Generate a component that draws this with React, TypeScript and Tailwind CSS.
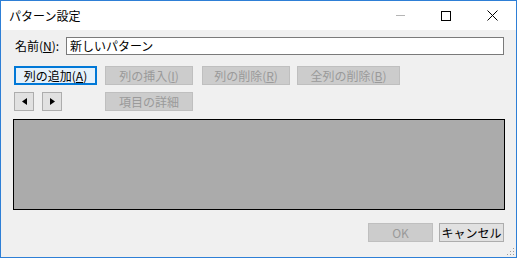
import React from "react";

const jp = { fontFamily: '"Noto Sans CJK JP", "Noto Sans", sans-serif' };

function Btn({
  children,
  w,
  disabled,
  focused,
  className = "",
}: {
  children: React.ReactNode;
  w: string;
  disabled?: boolean;
  focused?: boolean;
  className?: string;
}) {
  const base = "flex h-[19px] items-center justify-center border text-[12px] leading-none";
  const tone = disabled
    ? "border-[#bfbfbf] bg-[#cccccc] text-[#9a9a9a]"
    : focused
      ? "border-[#0078d7] bg-[#e5f1fb] text-black shadow-[inset_0_0_0_1px_#0078d7]"
      : "border-[#adadad] bg-[#e1e1e1] text-black";
  return <div className={`${base} ${tone} ${w} ${className}`}>{children}</div>;
}

export default function App() {
  return (
    <div
      className="flex h-[258px] w-[517px] flex-col border border-[#2e7fd6] bg-[#f0f0f0]"
      style={jp}
    >
      {/* title bar */}
      <div className="flex h-[29px] items-center bg-white">
        <span className="ml-[8px] text-[12px] text-black">パターン設定</span>
        <div className="ml-auto flex items-center">
          <span className="mr-[36px] h-px w-[9px] bg-[#b5b5b5]" />
          <span className="mr-[36px] h-[10px] w-[10px] border border-black" />
          <svg width="11" height="11" viewBox="0 0 11 11" className="mr-[18px]">
            <path d="M0.5 0.5 L10.5 10.5 M10.5 0.5 L0.5 10.5" stroke="#000" strokeWidth="1" />
          </svg>
        </div>
      </div>

      {/* body */}
      <div className="relative flex flex-1 flex-col px-[12px] pt-[7px]">
        <div className="flex h-[18px] items-center">
          <span className="ml-[2px] w-[51px] text-[12px] leading-none text-black">
            名前(<span className="underline">N</span>):
          </span>
          <div className="flex h-[18px] w-[439px] items-center border border-[#7a7a7a] bg-white pl-[3px] text-[12px] leading-none text-black">
            新しいパターン
          </div>
        </div>

        <div className="mt-[11px] flex">
          <Btn w="w-[83px]" focused className="ml-px">
            列の追加(<span className="underline">A</span>)
          </Btn>
          <Btn w="w-[88px]" disabled className="ml-[8px]">
            列の挿入(<span className="underline">I</span>)
          </Btn>
          <Btn w="w-[88px]" disabled className="ml-[9px]">
            列の削除(<span className="underline">R</span>)
          </Btn>
          <Btn w="w-[103px]" disabled className="ml-[7px]">
            全列の削除(<span className="underline">B</span>)
          </Btn>
        </div>

        <div className="mt-[7px] flex">
          <Btn w="w-[20px]" className="ml-px">
            <svg width="5" height="7" viewBox="0 0 5 7">
              <path d="M5 0 L0 3.5 L5 7 Z" fill="#000" />
            </svg>
          </Btn>
          <Btn w="w-[20px]" className="ml-[8px]">
            <svg width="5" height="7" viewBox="0 0 5 7">
              <path d="M0 0 L5 3.5 L0 7 Z" fill="#000" />
            </svg>
          </Btn>
          <Btn w="w-[88px]" disabled className="ml-[43px]">
            項目の詳細
          </Btn>
        </div>

        <div className="mt-[8px] h-[91px] w-[492px] border border-black bg-[#ababab]" />

        <div className="mt-[13px] flex w-[491px] justify-end">
          <Btn w="w-[65px]" disabled>
            OK
          </Btn>
          <Btn w="w-[65px]" className="ml-[6px]">
            キャンセル
          </Btn>
        </div>

        {/* size grip */}
        <svg width="10" height="10" viewBox="0 0 10 10" className="absolute bottom-[1px] right-[1px]">
          {[
            [8, 2],
            [8, 5],
            [5, 5],
            [8, 8],
            [5, 8],
            [2, 8],
          ].map(([x, y]) => (
            <rect key={`${x}-${y}`} x={x} y={y} width="1" height="1" fill="#9c9c9c" />
          ))}
        </svg>
      </div>
    </div>
  );
}
